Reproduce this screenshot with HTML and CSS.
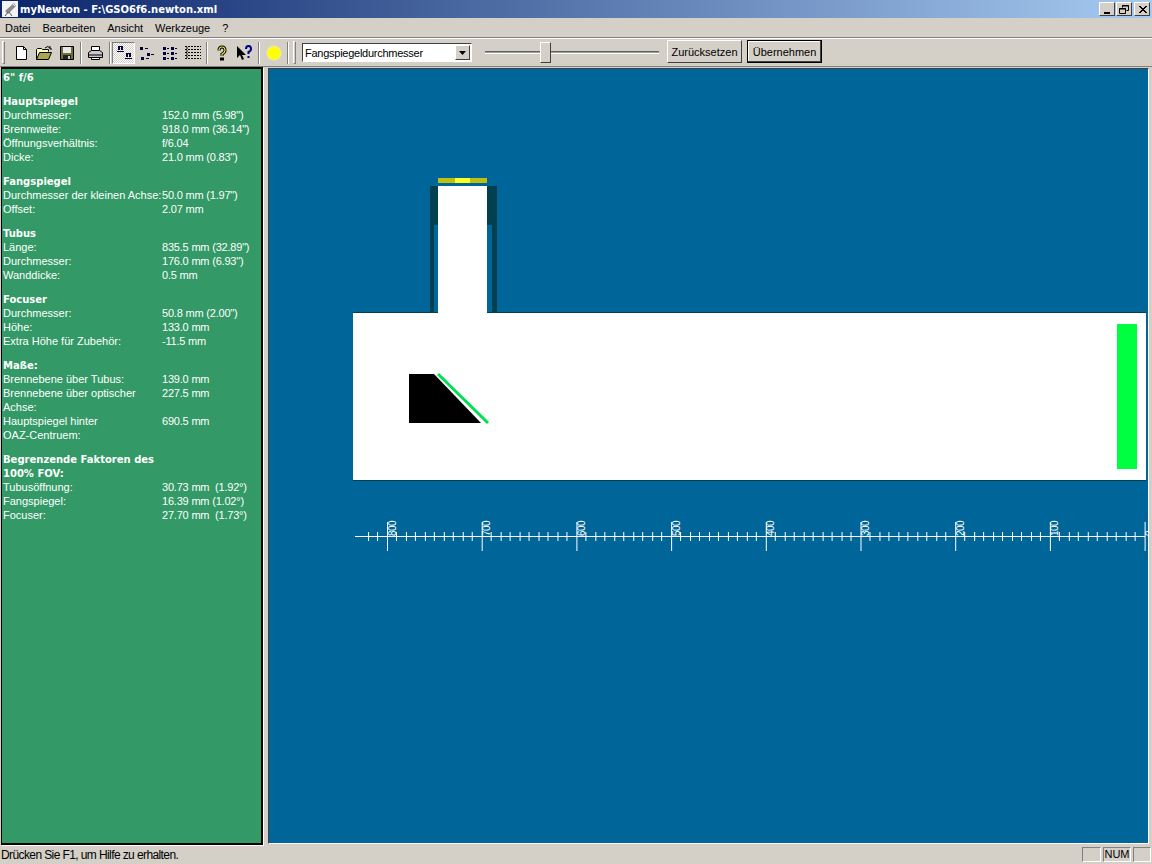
FILE: index.html
```html
<!DOCTYPE html>
<html lang="de">
<head>
    <meta charset="UTF-8">
    <title>myNewton - F:\GSO6f6.newton.xml</title>
    <link rel="stylesheet" href="styles.css">
</head>
<body>

    <div class="titlebar">
        <svg class="app-icon" width="16" height="16" viewBox="0 0 16 16">
            <rect width="16" height="16" fill="#f4f4f4"/>
            <path d="M3 10L12 2l2 3-8 8z" fill="#8a8a8a"/>
            <path d="M6 11l-3 4M7 11l3 4" stroke="#555" fill="none"/>
            <path d="M11 3l2 2" stroke="#fff"/>
        </svg>
        <span class="title-text">myNewton - F:\GSO6f6.newton.xml</span>
        <div class="win-btns">
            <button class="win-btn"><svg width="9" height="9"><rect x="1" y="7" width="6" height="2" fill="#000"/></svg></button>
            <button class="win-btn"><svg width="10" height="9"><path d="M3.500 2.500v-2h6v5h-2M0.500 3.500h6v5h-6z" fill="none" stroke="#000"/><path d="M3 1h7M0 4h7" stroke="#000"/></svg></button>
            <button class="win-btn win-close"><svg width="9" height="9"><path d="M1 1l7 7M2 1l7 7M8 1L1 8M9 1L2 8" stroke="#000" fill="none"/></svg></button>
        </div>
    </div>

    <div class="menubar">
        <span>Datei</span>
        <span>Bearbeiten</span>
        <span>Ansicht</span>
        <span>Werkzeuge</span>
        <span>?</span>
    </div>

    <div class="toolbar">
        <div class="gripper"></div>
        <div class="tool first-tool"><svg width="16" height="16"><path d="M3.500 1.500h7l3 3v10h-10z" fill="#fff" stroke="#000"/><path d="M10.500 1.500v3h3" fill="none" stroke="#000"/></svg></div>
        <div class="tool"><svg width="18" height="16"><path d="M1.500 14.500v-10l1-1h4l1 1h6v2" fill="#ffffc0" stroke="#000"/><path d="M1.500 14.500l3-7h12l-3 7z" fill="#a8a850" stroke="#000"/><path d="M10 3q3-3 5 0M15 1v3h2" fill="none" stroke="#000"/></svg></div>
        <div class="tool"><svg width="16" height="16"><path d="M1.500 1.500h13v13h-13z" fill="#6e6e3a" stroke="#000"/><rect x="4" y="2" width="8" height="6" fill="#e8e8e8"/><rect x="4" y="10" width="8" height="4" fill="#222"/><rect x="9" y="11" width="2" height="3" fill="#ccc"/></svg></div>
        <div class="tool-sep"></div>
        <div class="tool"><svg width="17" height="16"><path d="M4.500 1.500h8v5h-8z" fill="#fff" stroke="#000"/><path d="M1.500 7.500l3-2h8l3 2v5h-14z" fill="#c8c8c8" stroke="#000"/><path d="M2 10h13" stroke="#000"/><path d="M4.500 12.500h8v2h-8z" fill="#fff" stroke="#000"/></svg></div>
        <div class="tool-sep sep-view"></div>
        <div class="tool tool-on"><svg width="18" height="18"><path d="M3 2h5v4H6V3H5v3H3zM2 7h7v1H2zM11 9h5v4h-2v-3h-1v3h-2zM10 14h7v1h-7z" fill="#000040"/></svg></div>
        <div class="tool"><svg width="16" height="16"><path d="M1 2h3v3H1zM6 3h3v1H6zM8 8h3v3H8zM12 9h3v1h-3zM2 12h3v3H2zM7 13h3v1H7z" fill="#000040"/></svg></div>
        <div class="tool"><svg width="16" height="16"><path d="M1 2h3v3H1zM5 3h2v1H5zM9 2h3v3H9zM13 3h2v1h-2zM1 7h3v3H1zM5 8h2v1H5zM9 7h3v3H9zM13 8h2v1h-2zM1 12h3v3H1zM5 13h2v1H5zM9 12h3v3H9zM13 13h2v1h-2z" fill="#000040"/></svg></div>
        <div class="tool"><svg width="16" height="16"><path d="M0 1.500h16M0 4.500h16M0 7.500h16M0 10.500h16M0 13.500h16" stroke="#000" fill="none" stroke-dasharray="2 1"/><path d="M2 2v2M2 5v2M2 8v2M2 11v2" stroke="#000" fill="none"/></svg></div>
        <div class="tool-sep sep-help"></div>
        <div class="tool"><svg width="12" height="16"><path d="M3 5.500q0-3.500 3-3.500t3 3.500q0 2-3 3.500v2" fill="none" stroke="#000" stroke-width="3"/><path d="M3 5.500q0-3.500 3-3.500t3 3.500q0 2-3 3.500v2" fill="none" stroke="#e8e850" stroke-width="1.200"/><rect x="4" y="12.500" width="4" height="3" fill="#000"/></svg></div>
        <div class="tool"><svg width="17" height="16"><path d="M1 1v12l3-3 2 5 2-1-2-4h4z" fill="#000"/><path d="M10 4q0-3 2.500-3t2.500 3q0 2-2.500 3v2" fill="none" stroke="#000080" stroke-width="2"/><rect x="11.500" y="11" width="2" height="2" fill="#000080"/></svg></div>
        <div class="tool-sep"></div>
        <div class="tool"><svg width="16" height="16"><circle cx="8" cy="8" r="7.500" fill="#f0f080"/><circle cx="8" cy="8" r="6" fill="#ffff00"/></svg></div>
        <div class="tool-sep"></div>
        <div class="gripper second-grip"></div>

        <div class="combo">
            <span class="combo-text">Fangspiegeldurchmesser</span>
            <div class="combo-arrow"><svg width="7" height="4"><path d="M0 0h7L3.500 4z" fill="#000"/></svg></div>
        </div>
        <div class="slider"><div class="slider-thumb"></div></div>
        <button class="btn btn-reset">Zurücksetzen</button>
        <button class="btn btn-default">Übernehmen</button>
    </div>

    <div class="workspace">
        <div class="info-panel">
            <div class="info-name">6" f/6</div>

            <div class="info-head">Hauptspiegel</div>
            <div class="info-grid">
                <span>Durchmesser:</span><span>152.0 mm (5.98")</span>
                <span>Brennweite:</span><span>918.0 mm (36.14")</span>
                <span>Öffnungsverhältnis:</span><span>f/6.04</span>
                <span>Dicke:</span><span>21.0 mm (0.83")</span>
            </div>

            <div class="info-head">Fangspiegel</div>
            <div class="info-grid">
                <span>Durchmesser der kleinen Achse:</span><span>50.0 mm (1.97")</span>
                <span>Offset:</span><span>2.07 mm</span>
            </div>

            <div class="info-head">Tubus</div>
            <div class="info-grid">
                <span>Länge:</span><span>835.5 mm (32.89")</span>
                <span>Durchmesser:</span><span>176.0 mm (6.93")</span>
                <span>Wanddicke:</span><span>0.5 mm</span>
            </div>

            <div class="info-head">Focuser</div>
            <div class="info-grid">
                <span>Durchmesser:</span><span>50.8 mm (2.00")</span>
                <span>Höhe:</span><span>133.0 mm</span>
                <span>Extra Höhe für Zubehör:</span><span>-11.5 mm</span>
            </div>

            <div class="info-head">Maße:</div>
            <div class="info-grid">
                <span>Brennebene über Tubus:</span><span>139.0 mm</span>
                <span>Brennebene über optischer Achse:</span><span>227.5 mm</span>
                <span>Hauptspiegel hinter<br>OAZ-Centruem:</span><span>690.5 mm</span>
            </div>

            <div class="info-head info-head-wrap">Begrenzende Faktoren des 100% FOV:</div>
            <div class="info-grid">
                <span>Tubusöffnung:</span><span>30.73 mm  (1.92°)</span>
                <span>Fangspiegel:</span><span>16.39 mm (1.02°)</span>
                <span>Focuser:</span><span>27.70 mm  (1.73°)</span>
            </div>
        </div>

        <div class="drawing-panel">
            <svg class="drawing" viewBox="269 69 879 774" width="879" height="774" shape-rendering="crispEdges">
                <defs>
                    <pattern id="ticks" patternUnits="userSpaceOnUse" x="387" y="522" width="94.7" height="29">
                        <rect x="0" y="0" width="1" height="29" fill="#fff"/>
                        <rect x="9" y="10" width="1" height="9" fill="#fff"/>
                        <rect x="19" y="10" width="1" height="9" fill="#fff"/>
                        <rect x="28" y="10" width="1" height="9" fill="#fff"/>
                        <rect x="38" y="10" width="1" height="9" fill="#fff"/>
                        <rect x="47" y="10" width="1" height="9" fill="#fff"/>
                        <rect x="57" y="10" width="1" height="9" fill="#fff"/>
                        <rect x="66" y="10" width="1" height="9" fill="#fff"/>
                        <rect x="76" y="10" width="1" height="9" fill="#fff"/>
                        <rect x="85" y="10" width="1" height="9" fill="#fff"/>
                    </pattern>
                </defs>

                <!-- Tubus -->
                <rect x="353" y="312" width="793" height="169" fill="#004050"/>
                <rect x="353" y="313" width="793" height="167" fill="#fff"/>

                <!-- Focuser -->
                <rect x="430" y="186" width="4" height="127" fill="#004050"/>
                <rect x="434" y="186" width="5" height="39" fill="#004050"/>
                <rect x="487" y="186" width="5" height="39" fill="#004050"/>
                <rect x="492" y="186" width="5" height="127" fill="#004050"/>
                <rect x="438" y="186" width="49" height="128" fill="#fff"/>
                <rect x="438" y="178" width="49" height="5" fill="#bfbf10"/>
                <rect x="455" y="178" width="15" height="5" fill="#ffff20"/>

                <!-- Fangspiegel -->
                <path d="M409 374h25l47 49h-72z" fill="#000" shape-rendering="auto"/>
                <path d="M438 374l50 49" stroke="#00e050" stroke-width="3" fill="none" shape-rendering="auto"/>

                <!-- Hauptspiegel -->
                <rect x="1117" y="324" width="20" height="145" fill="#00ff40"/>

                <!-- Skala -->
                <rect x="355" y="536" width="790" height="1" fill="#fff"/>
                <rect x="360" y="522" width="786" height="29" fill="url(#ticks)"/>
                <g class="scale-text" shape-rendering="auto">
                    <text transform="translate(396 536) rotate(-90)">800</text>
                    <text transform="translate(490 536) rotate(-90)">700</text>
                    <text transform="translate(585 536) rotate(-90)">600</text>
                    <text transform="translate(680 536) rotate(-90)">500</text>
                    <text transform="translate(774 536) rotate(-90)">400</text>
                    <text transform="translate(869 536) rotate(-90)">300</text>
                    <text transform="translate(964 536) rotate(-90)">200</text>
                    <text transform="translate(1058 536) rotate(-90)">100</text>
                    <text transform="translate(1153 536) rotate(-90)">0</text>
                </g>
            </svg>
        </div>
    </div>

    <div class="statusbar">
        <span class="status-text">Drücken Sie F1, um Hilfe zu erhalten.</span>
        <span class="pane pane-a"></span>
        <span class="pane pane-num">NUM</span>
        <span class="pane pane-c"></span>
    </div>

</body>
</html>
```
FILE: styles.css
```css
html, body {
    margin: 0;
    height: 100%;
    overflow: hidden;
}

body {
    width: 1152px;
    height: 864px;
    display: flex;
    flex-direction: column;
    background-color: #d4d0c8;
    font-family: "Liberation Sans", Arial, sans-serif;
    font-size: 11px;
    color: #000;
}

/* Titelleiste */
.titlebar {
    height: 18px;
    flex: none;
    display: flex;
    align-items: center;
    background: linear-gradient(to right, #0a246a, #a6caf0);
    color: #fff;
}

.app-icon {
    margin-left: 2px;
    margin-right: 2px;
}

.title-text {
    font-family: "DejaVu Sans", sans-serif;
    font-weight: bold;
    font-size: 10px;
}

.win-btns {
    margin-left: auto;
    margin-right: 2px;
    display: flex;
    gap: 1px;
}

.win-btn {
    width: 16px;
    height: 14px;
    padding: 0;
    background-color: #d4d0c8;
    border: 1px solid;
    border-color: #fff #404040 #404040 #fff;
    display: flex;
    align-items: center;
    justify-content: center;
}

.win-close {
    margin-left: 1px;
}

/* Menue */
.menubar {
    height: 19px;
    flex: none;
    display: flex;
    align-items: center;
    gap: 12px;
    padding-left: 5px;
    font-size: 11px;
    letter-spacing: -0.04px;
    border-bottom: 1px solid #808080;
    box-sizing: content-box;
}

/* Werkzeugleiste */
.toolbar {
    height: 27px;
    flex: none;
    display: flex;
    align-items: center;
    border-top: 1px solid #fff;
    border-bottom: 1px solid #808080;
}

.gripper {
    width: 1px;
    height: 21px;
    margin-left: 2px;
    border: 1px solid;
    border-color: #fff #808080 #808080 #fff;
}

.second-grip {
    margin-left: 2px;
}

.tool {
    width: 23px;
    height: 22px;
    flex: none;
    display: flex;
    align-items: center;
    justify-content: center;
    box-sizing: border-box;
}

.first-tool {
    margin-left: 4px;
}

.tool-on {
    border: 1px solid;
    border-color: #808080 #fff #fff #808080;
    background: repeating-conic-gradient(#fff 0 25%, #d4d0c8 0 50%) 0 0 / 2px 2px;
}

.tool-sep {
    width: 0;
    height: 22px;
    margin: 0 2px;
    border-left: 1px solid #808080;
    border-right: 1px solid #fff;
}

.sep-view {
    margin-right: 1px;
}

.sep-help {
    margin: 0 2px;
}

.combo {
    width: 170px;
    height: 19px;
    margin-left: 6px;
    flex: none;
    display: flex;
    align-items: center;
    justify-content: space-between;
    box-sizing: border-box;
    background-color: #fff;
    border: 1px solid;
    border-color: #404040 #fff #fff #404040;
}

.combo-text {
    padding-left: 2px;
    letter-spacing: -0.26px;
}

.combo-arrow {
    width: 15px;
    height: 15px;
    margin-right: 1px;
    box-sizing: border-box;
    display: flex;
    align-items: center;
    justify-content: center;
    background-color: #d4d0c8;
    border: 1px solid;
    border-color: #fff #404040 #404040 #fff;
}

.slider {
    width: 174px;
    height: 3px;
    margin-left: 13px;
    position: relative;
    background-color: #a0a0a0;
    border-top: 1px solid #606060;
    border-bottom: 1px solid #fff;
    box-sizing: border-box;
}

.slider-thumb {
    position: absolute;
    left: 55px;
    top: -10px;
    width: 11px;
    height: 21px;
    box-sizing: border-box;
    background-color: #d4d0c8;
    border: 1px solid;
    border-color: #fff #404040 #404040 #fff;
}

.btn {
    width: 75px;
    height: 23px;
    padding: 0;
    margin-top: -2px;
    font-family: inherit;
    font-size: 11px;
    color: #000;
    background-color: #d4d0c8;
    border: 1px solid;
    border-color: #fff #404040 #404040 #fff;
}

.btn-reset {
    margin-left: 8px;
}

.btn-default {
    margin-left: 5px;
    border-color: #000;
    box-shadow: inset -1px -1px 0 #404040, inset 1px 1px 0 #fff;
}

/* Hauptbereich */
.workspace {
    flex: 1;
    display: flex;
    min-height: 0;
    padding-top: 1px;
}

.info-panel {
    width: 262px;
    height: 778px;
    margin: -1px 0 0 1px;
    padding: 2px 0 0 1px;
    flex: none;
    box-sizing: border-box;
    background-color: #339966;
    color: #fff;
    border: 1px solid #000;
    border-width: 2px 2px 2px 1px;
    line-height: 14px;
    box-shadow: 1px 1px 0 #fff;
}

.info-name,
.info-head {
    font-family: "DejaVu Sans", sans-serif;
    font-size: 10px;
    font-weight: bold;
}

.info-name {
    margin-bottom: 10px;
}

.info-head-wrap {
    width: 160px;
}

.info-grid {
    display: grid;
    grid-template-columns: 159px 1fr;
    margin: -1px 0 11px;
    white-space: pre-wrap;
}

.info-grid span:nth-child(even) {
    letter-spacing: -0.2px;
}

.drawing-panel {
    width: 881px;
    height: 776px;
    margin-left: 5px;
    flex: none;
    box-sizing: border-box;
    background-color: #006699;
    border: 1px solid;
    border-color: #404040 #fff #fff #404040;
}

.drawing {
    display: block;
}

.scale-text text {
    font-size: 10px;
    letter-spacing: -0.5px;
    fill: #fff;
}

/* Statuszeile */
.statusbar {
    height: 19px;
    flex: none;
    display: flex;
    align-items: center;
    padding-right: 1px;
}

.status-text {
    margin-left: 1px;
    font-size: 12px;
    letter-spacing: -0.6px;
    margin-right: auto;
}

.pane {
    height: 15px;
    box-sizing: border-box;
    border: 1px solid;
    border-color: #808080 #fff #fff #808080;
    line-height: 13px;
    text-align: center;
}

.pane-a {
    width: 19px;
}

.pane-num {
    width: 28px;
    margin-left: 2px;
}

.pane-c {
    width: 18px;
    margin-left: 2px;
}
```
